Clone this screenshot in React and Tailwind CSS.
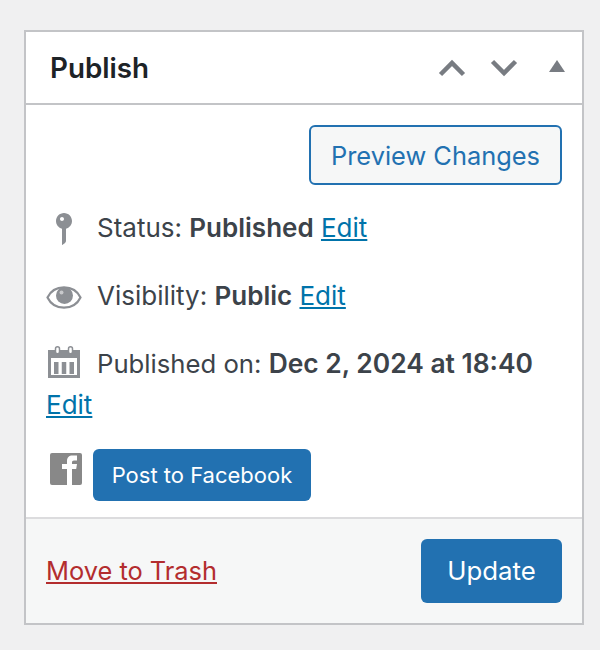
export default function App() {
  return (
    <div className="min-h-[650px] w-[600px] bg-[#f0f0f1] pl-6 pt-[30px] font-['Inter',sans-serif] text-[26px] leading-[34px] text-[#3c434a]">
      <div className="flex h-[595px] w-[560px] flex-col border-2 border-[#c3c4c7] bg-white">
        <div className="flex h-[73px] shrink-0 items-center border-b-2 border-[#c3c4c7] pl-6">
          <h2 className="text-[27.8px] font-semibold text-[#1d2327]">Publish</h2>
          <div className="ml-auto flex items-center">
            <svg width="28" height="18" viewBox="0 0 28 18"><path d="M2.500 15.500 14 4l11.500 11.500" fill="none" stroke="#787c82" strokeWidth="4.500" /></svg>
            <svg width="28" height="18" viewBox="0 0 28 18" className="ml-[24px]"><path d="M2.500 2.500 14 14 25.500 2.500" fill="none" stroke="#787c82" strokeWidth="4.500" /></svg>
            <svg width="16" height="12" viewBox="0 0 16 12" className="ml-[31px] mr-[17px] -translate-y-[2px]"><path d="M8 0l8 12H0z" fill="#787c82" /></svg>
          </div>
        </div>
        <div className="flex flex-1 flex-col">
          <div className="flex justify-end pr-5 pt-5">
            <button className="flex h-[60px] w-[253px] items-center justify-center rounded-[6px] border-2 border-[#2271b1] bg-[#f6f7f7] pt-[1px] text-[25.400px] text-[#2271b1]">Preview Changes</button>
          </div>
          <div className="mt-[26px] flex h-[34px] items-center pl-5">
            <span className="flex w-[51px] justify-start">
              <svg width="40" height="40" viewBox="0 0 20 20" className="-ml-[2px] mt-[2px] shrink-0"><path fill="#8c8f94" d="M14 6c0 1.860-1.280 3.410-3 3.860V16c0 1-2 2-2 2V9.860c-1.720-.45-3-2-3-3.860 0-2.210 1.790-4 4-4s4 1.790 4 4zM8 5c0 .55.45 1 1 1s1-.45 1-1-.45-1-1-1-1 .45-1 1z" /></svg>
            </span>
            <span>Status: <b className="font-semibold">Published</b> <a className="text-[#0073aa] underline">Edit</a></span>
          </div>
          <div className="mt-[34px] flex h-[34px] items-center pl-5">
            <span className="flex w-[51px] justify-start">
              <svg width="36" height="36" viewBox="0 0 36 36" className="shrink-0">
                <path d="M1.500 19.500C8 6 28 6 34.500 19.500C28 33 8 33 1.500 19.500Z" fill="none" stroke="#8c8f94" strokeWidth="2.200" />
                <circle cx="18.500" cy="17.500" r="8.500" fill="#8c8f94" />
                <circle cx="15.500" cy="14.500" r="2" fill="#c8c9cc" />
              </svg>
            </span>
            <span>Visibility: <b className="font-semibold">Public</b> <a className="text-[#0073aa] underline">Edit</a></span>
          </div>
          <div className="mt-[34px] pl-5">
            <div className="flex h-[34px] items-center">
              <span className="flex w-[51px] justify-start">
                <svg width="36" height="36" viewBox="0 0 36 36" className="shrink-0">
                  <path fill="#8c8f94" fillRule="evenodd" d="M2 4h32v28H2zM5 12v17h26V12z" />
                  <path fill="#8c8f94" d="M8 16h4.500v12H8zM15.750 16h4.500v12h-4.500zM23.500 16H28v12h-4.500z" />
                  <rect x="9.500" y="0.800" width="4" height="7" rx="2" fill="#fff" stroke="#8c8f94" strokeWidth="1.500" />
                  <rect x="22.500" y="0.800" width="4" height="7" rx="2" fill="#fff" stroke="#8c8f94" strokeWidth="1.500" />
                </svg>
              </span>
              <span className="mb-[2px] text-[25.700px]">Published on: <b className="text-[26.400px] font-semibold">Dec 2, 2024 at 18:40</b></span>
            </div>
            <a className="mt-[7px] block text-[#0073aa] underline">Edit</a>
          </div>
          <div className="mt-[27px] flex items-start pl-6">
            <svg width="32" height="32" viewBox="0 0 32 32" className="mt-[4px]">
              <rect width="32" height="32" rx="2" fill="#888" />
              <path fill="#fff" d="M17 32V16h-5v-5h5V8c0-3.500 2-5.500 5.500-5.500H27v5h-3c-1.300 0-2 .7-2 2V11h5l-.8 5H22v16z" />
            </svg>
            <button className="ml-[11px] flex h-[52px] w-[218px] items-center justify-center rounded-[6px] bg-[#2271b1] text-[22px] text-white">Post to Facebook</button>
          </div>
        </div>
        <div className="flex h-[106px] shrink-0 items-center justify-between border-t-2 border-[#dcdcde] bg-[#f6f7f7] pl-5 pr-5">
          <a className="text-[25.400px] text-[#b32d2e] underline">Move to Trash</a>
          <button className="flex h-[64px] w-[141px] items-center justify-center rounded-[6px] bg-[#2271b1] text-[25.800px] text-white">Update</button>
        </div>
      </div>
    </div>
  );
}
